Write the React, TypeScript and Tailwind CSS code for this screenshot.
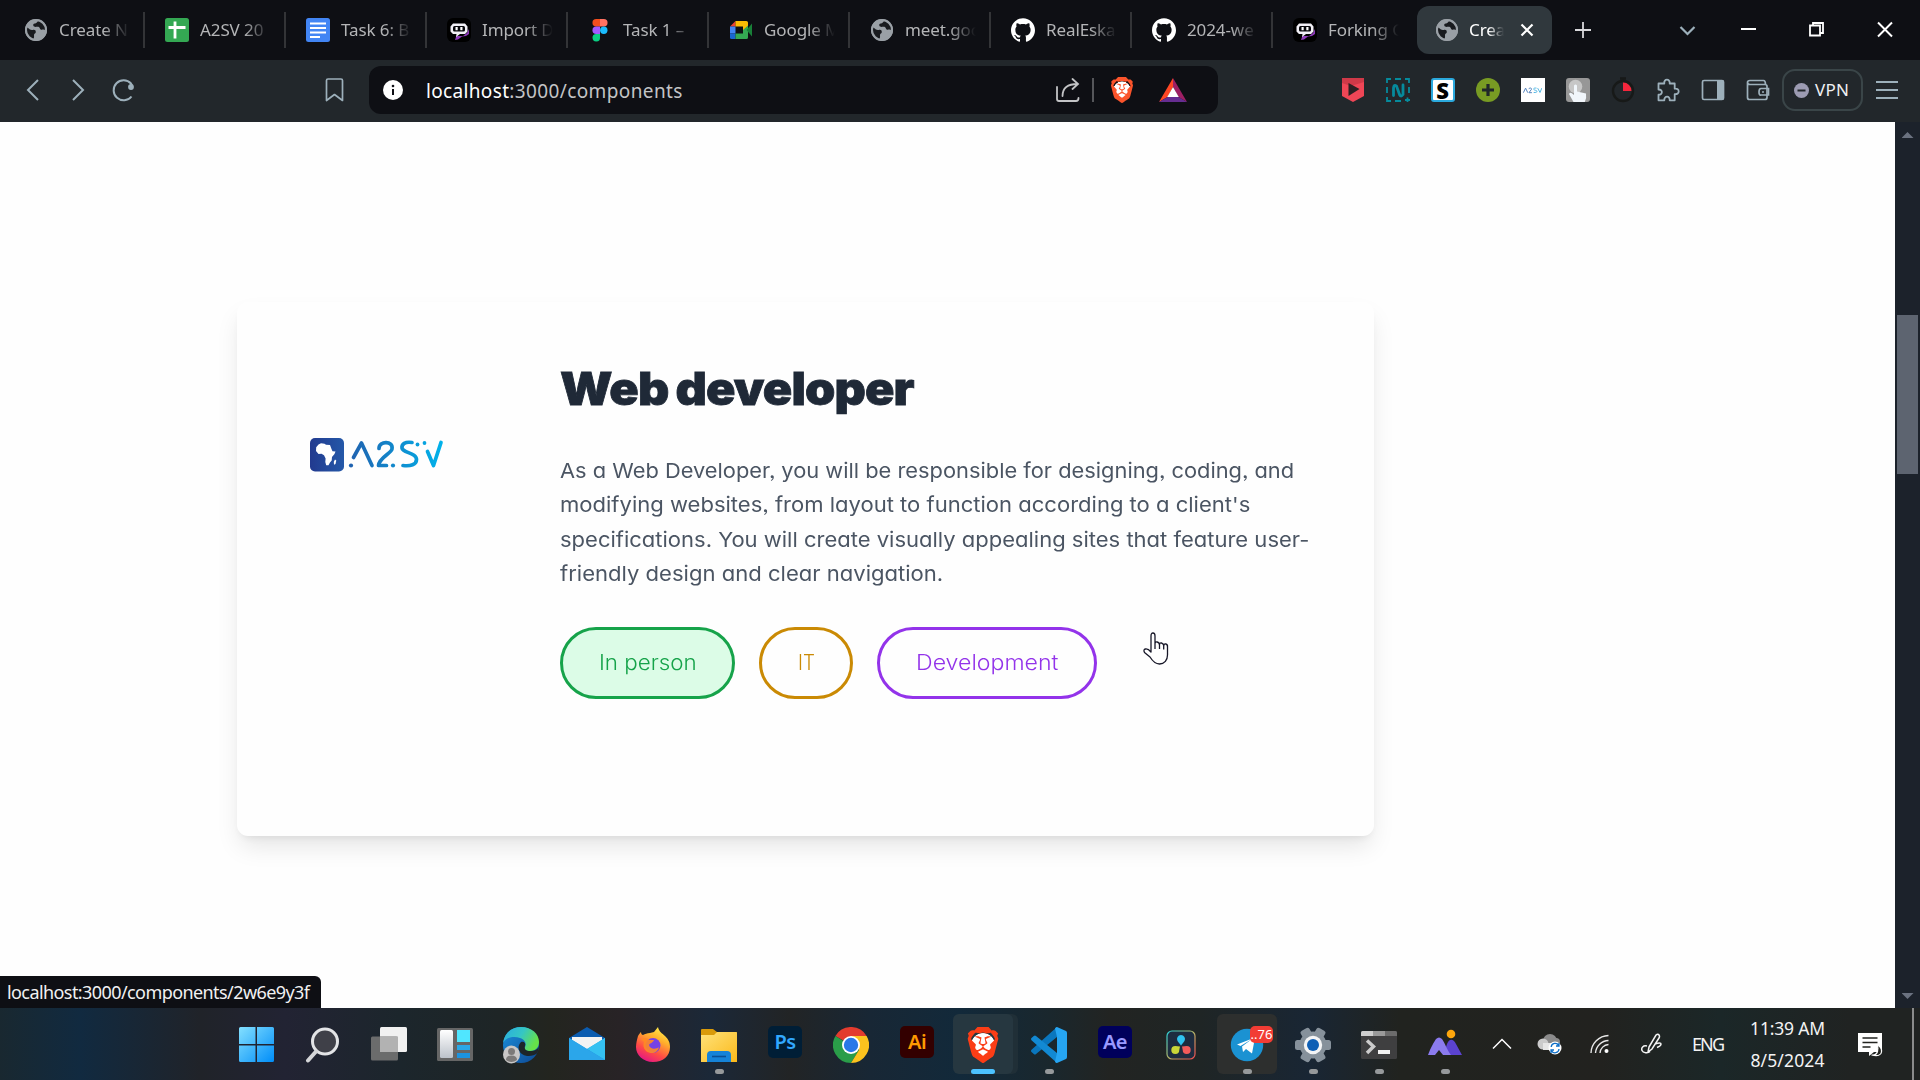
import React, { useLayoutEffect, useRef, useState } from "react";
import { SiBrave, SiGithub } from "react-icons/si";

/** Single line of text tracked so that it spans exactly `width` pixels. */
function Line({ text, width, className = "" }: { text: string; width: number; className?: string }) {
  const ref = useRef<HTMLSpanElement>(null);
  const [tracking, setTracking] = useState(0);
  useLayoutEffect(() => {
    const el = ref.current;
    if (!el) return;
    el.style.letterSpacing = "0px";
    setTracking((width - el.getBoundingClientRect().width) / (text.length - 1));
  }, [text, width]);
  return (
    <span ref={ref} className={`inline-block whitespace-pre ${className}`} style={{ letterSpacing: `${tracking}px` }}>
      {text}
    </span>
  );
}

/** Single line of text whose glyphs are widened to span exactly `width` pixels. */
function WideLine({ text, width, className = "" }: { text: string; width: number; className?: string }) {
  const ref = useRef<HTMLSpanElement>(null);
  const [scale, setScale] = useState(1);
  useLayoutEffect(() => {
    if (ref.current) setScale(width / ref.current.offsetWidth);
  }, [text, width]);
  return (
    <span className="block" style={{ width }}>
      <span ref={ref} className={`inline-block origin-left whitespace-pre ${className}`} style={{ transform: `scaleX(${scale})` }}>
        {text}
      </span>
    </span>
  );
}

const Globe = () => (
  <svg width="24" height="24" viewBox="0 0 24 24">
    <circle cx="12" cy="12" r="11" fill="#9aa0a6" />
    <path d="M3.2 9.5c2 1.3 3.3 2.9 5.6 2.4 2-.4 3 .3 3 2 0 1.500-1.800 1.500-1.800 3 0 1.600.3 2.400-.6 4.100C5 20 2 16.500 2.300 12.500zM14 2.700c-.6 1.600-1.500 2.400-3.200 2.700-1.400.3-1.800 1-1.500 2.100.4 1.300 2 1.600 3.200 1.300 1.600-.3 2.700-.1 3.300 1.400.5 1.300 1.600 1.700 2.800 1.400 1.400-.3 2.300.2 3 1C22 7.500 18.500 3.500 14 2.700z" fill="#0e0f14" opacity=".92" />
    <circle cx="12" cy="12" r="10" fill="none" stroke="#9aa0a6" strokeWidth="2" />
  </svg>
);

const Sheets = () => (
  <svg width="24" height="24" viewBox="0 0 24 24">
    <rect width="24" height="24" rx="2.500" fill="#34a853" />
    <path d="M10 3.500v17M3.500 9.500h17" stroke="#fff" strokeWidth="2.800" />
  </svg>
);

const Docs = () => (
  <svg width="24" height="24" viewBox="0 0 24 24">
    <rect width="24" height="24" rx="2.500" fill="#4285f4" />
    <path d="M4 5.500h16M4 10h16M4 14.500h16M4 19h10" stroke="#fff" strokeWidth="2.200" />
  </svg>
);

const Chatbot = () => (
  <svg width="24" height="24" viewBox="0 0 24 24">
    <rect width="24" height="24" rx="6" fill="#000" />
    <path d="M9 18h7l4-3 2-4v5l-3 2-4 .5-4 3-3 .5 1-3z" fill="#8d3ab8" />
    <path d="M6 5.500h12l2.500 3v5L18 16h-5l-4 3 .5-3H6L3.500 13.500v-5z" fill="#f2f0f6" />
    <rect x="6" y="8" width="12" height="5.500" rx="1.500" fill="#07070a" />
    <path d="M8.500 9h2.200v3.300H8.500zM13.300 9h2.200v3.300h-2.200z" fill="#fff" />
  </svg>
);

const Figma = () => (
  <svg width="24" height="24" viewBox="0 0 24 24">
    <path d="M8.200 1H12v7.500H8.200a3.750 3.750 0 0 1 0-7.500z" fill="#f24e1e" />
    <path d="M12 1h3.800a3.750 3.750 0 0 1 0 7.500H12z" fill="#ff7262" />
    <path d="M8.200 8.500H12V16H8.200a3.750 3.750 0 0 1 0-7.500z" fill="#a259ff" />
    <circle cx="15.800" cy="12.200" r="3.700" fill="#1abcfe" />
    <path d="M8.200 16H12v3.500A3.750 3.750 0 1 1 8.200 16z" fill="#0acf83" />
  </svg>
);

const Meet = () => (
  <svg width="24" height="24" viewBox="0 0 24 24">
    <path d="M1 8.500 6.500 3v5.500z" fill="#ea4335" />
    <path d="M1 8.500h5.500v7H1z" fill="#4285f4" />
    <path d="M1 15.500h5.500V21H2.500Q1 21 1 19.500z" fill="#1967d2" />
    <path d="M6.500 3h10.800q1.700 0 1.700 1.600V9l-5 4V8.500H6.500z" fill="#fbbc04" />
    <path d="M6.500 15.500H14V12l5-4.500v11.900q0 1.600-1.700 1.600H6.500z" fill="#34a853" />
    <path d="m17.500 12 5.500-6.500v13z" fill="#188038" />
  </svg>
);

const Github = () => <SiGithub size={24} color="#fff" />;

const TABS = [
  { icon: <Globe />, label: "Create N" },
  { icon: <Sheets />, label: "A2SV 20" },
  { icon: <Docs />, label: "Task 6: B" },
  { icon: <Chatbot />, label: "Import D" },
  { icon: <Figma />, label: "Task 1 –" },
  { icon: <Meet />, label: "Google M" },
  { icon: <Globe />, label: "meet.goo" },
  { icon: <Github />, label: "RealEska" },
  { icon: <Github />, label: "2024-we" },
  { icon: <Chatbot />, label: "Forking C" },
];

function TabStrip() {
  return (
    <div className="flex h-[60px] items-center bg-[#0e0f14] pl-1 text-[17px] tracking-[-0.1px] text-[#b4b5b7]">
      {TABS.map((t, i) => (
        <div key={i} className={`flex h-9 w-[141px] shrink-0 items-center pl-5 ${i < 9 ? "border-r-2 border-[#333437]" : ""}`}>
          <div className="w-6 shrink-0">{t.icon}</div>
          <div className="ml-[11px] w-[71px] overflow-hidden whitespace-nowrap [mask-image:linear-gradient(to_right,#000_62%,transparent)]">
            {t.label}
          </div>
        </div>
      ))}
      <div className="mr-3 ml-[3px] flex h-12 w-[135px] shrink-0 items-center rounded-xl bg-[#30383d] pl-[18px] text-white">
        <div className="w-6 shrink-0"><Globe /></div>
        <div className="ml-2.5 w-[35px] overflow-hidden whitespace-nowrap [mask-image:linear-gradient(to_right,#000_55%,transparent)]">Crea</div>
        <svg className="ml-[16px]" width="14" height="14" viewBox="0 0 14 14">
          <path d="m1.500 1.500 11 11m0-11-11 11" stroke="#fff" strokeWidth="2.200" />
        </svg>
      </div>
      <svg width="38" height="24" viewBox="0 0 38 24"><path d="M19 4v16M11 12h16" stroke="#d9d9dc" strokeWidth="1.800" /></svg>
      <div className="grow" />
      <div className="flex items-center">
        <svg className="w-[66px]" height="20" viewBox="0 0 66 20"><path d="m28.500 7 7 7 7-7" fill="none" stroke="#9db0bb" strokeWidth="2.200" /></svg>
        <svg className="w-[58px]" height="20" viewBox="0 0 58 20"><path d="M23 9h15" stroke="#fff" strokeWidth="2" /></svg>
        <svg className="w-[74px]" height="20" viewBox="0 0 74 20"><path d="M34 5.500h10v10H34zM37 5V3h10v10h-2.500" fill="none" stroke="#fff" strokeWidth="1.800" /></svg>
        <svg className="w-[70px]" height="20" viewBox="0 0 70 20"><path d="m28 2.500 14 14m0-14-14 14" fill="none" stroke="#fff" strokeWidth="2" /></svg>
      </div>
    </div>
  );
}

function Bat() {
  return (
    <svg width="28" height="24" viewBox="0 0 28 24">
      <path d="M14 0 0 24l8.500-5L14 9z" fill="#ff4724" />
      <path d="m14 0 14 24-8.500-5L14 9z" fill="#9e1f63" />
      <path d="m0 24 8.500-5h11L28 24z" fill="#662d91" />
      <path d="m14 9 5.800 10H8.200z" fill="#fff" />
    </svg>
  );
}

function A2svLogo({ width, height }: { width: number; height: number }) {
  return (
    <svg width={width} height={height} viewBox="0 0 134 34">
      <defs>
        <linearGradient id="a2box"><stop stopColor="#223a8f" /><stop offset="1" stopColor="#2458a8" /></linearGradient>
        <linearGradient id="a2text" gradientUnits="userSpaceOnUse" x1="38" x2="134" y1="0" y2="0">
          <stop stopColor="#2160ae" /><stop offset="1" stopColor="#00b4ec" />
        </linearGradient>
      </defs>
      <rect width="34" height="33.500" rx="5" fill="url(#a2box)" />
      <path d="M8.500 6.500 11 5.200l3.500.5 1.500 1 4 .3 1.500 4 1 2.200 3 .3-1 2.500-2.500 3-.3 3.500-1.700 2-1.500 2.800h-2.300L15.300 24l.3-3.500-1.600-3.300-2.500-1.400-3 .3L6 13l.2-3.800zM25 21.500l1.300 1-.8 3.500-1.500.8-.2-3z" fill="#fff" />
      <g fill="none" stroke="url(#a2text)" strokeWidth="3.700" strokeLinecap="round" strokeLinejoin="round">
        <path d="m43.500 19.500 8-14.500 10.500 22.500" />
        <path d="M69 10.500c0-8 14.500-8 13 .5-.8 4.500-12.800 8.500-13.500 16.500h8" />
        <path d="M102 4.500c-7-1-10.500 1.500-10 5.500.5 5 14.500 4.500 14.500 11.500 0 5-6 7-13.500 6" />
        <path d="m117.500 13.500 6 14 7.500-23" />
      </g>
      <g fill="url(#a2text)">
        <circle cx="41" cy="27.500" r="2.100" /><circle cx="83" cy="27.500" r="2.100" />
        <circle cx="107.500" cy="6.500" r="1.900" /><circle cx="114.500" cy="5" r="1.900" />
      </g>
    </svg>
  );
}

const EXTENSIONS = [
  <svg width="24" height="26" viewBox="0 0 24 26">
    <path d="M1 1h22v18L12 25 1 19z" fill="#ef4656" /><path d="M1 1h22v4L10 9 1 6z" fill="#b9303f" opacity=".6" />
    <path d="M7.500 6v13L18.500 12z" fill="#2b2023" />
  </svg>,
  <svg width="24" height="24" viewBox="0 0 24 24" fill="none" stroke="#068a9c">
    <path d="M1 5V1h4M9 1h6M19 1h4v4M1 9v6M1 19v4h4M23 9v6M9 23h6M19 22h5M21.500 19.500v5" strokeWidth="1.800" />
    <path d="M7.500 17.500V10Q8 6 10.500 8l3 8.500q1.500 3 3.500 0V7" strokeWidth="2.800" strokeLinecap="round" />
  </svg>,
  <div className="flex h-6 w-6 items-center justify-center rounded-[3px] border-2 border-[#2ba9dd] bg-white text-[22px] leading-none font-black text-black">S</div>,
  <svg width="24" height="24" viewBox="0 0 24 24"><circle cx="12" cy="12" r="12" fill="#789b23" /><path d="M12 6v12M6 12h12" stroke="#20272a" strokeWidth="3.200" /></svg>,
  <div className="flex h-6 w-6 items-center justify-center bg-white">
    <svg width="19" height="7" viewBox="38 0 96 34" fill="none" strokeWidth="5" opacity=".8"><path d="m40 28 11-23 11 23M68 10c0-8 15-7 13 1L68 28h15" stroke="#2864ad" /><path d="M106 5c-18-3-18 9-5 11s10 13-9 11M112 5l12 22 9-22" stroke="#26a4dc" /></svg>
  </div>,
  <svg width="24" height="24" viewBox="0 0 24 24">
    <rect width="24" height="24" rx="3" fill="#979797" /><circle cx="9.500" cy="8.500" r="6.800" fill="#c7c7c7" />
    <path d="M8 7.500q1.500-2 3 0v6l9 2q.8 4-1.200 8.500H7.500L3 16q1-2 3.200-.5L8 17z" fill="#f1f6fb" />
  </svg>,
  <svg width="24" height="26" viewBox="0 0 24 26"><circle cx="12" cy="14" r="10" fill="none" stroke="#171918" strokeWidth="2.400" /><path d="M9 1.500h6M12 2v3" stroke="#171918" strokeWidth="2.500" /><path d="M12 5.500a8.500 8.500 0 0 1 8.500 8.500H12z" fill="#f5263c" /></svg>,
  <svg width="24" height="24" viewBox="0 0 24 24"><path d="M2.500 5.500h5.800c-.8-5.200 6-5.200 5.400 0h5v5.200c5.300-.8 5.300 6.200 0 5.400v6.200h-5c.5-4.800-5.800-4.800-5.400 0H2.500v-5.600c4.500.3 4.500-5.500 0-5.200z" fill="none" stroke="#9db0bb" strokeWidth="1.800" strokeLinejoin="round" /></svg>,
  <svg width="24" height="24" viewBox="0 0 24 24"><rect x="1.500" y="2.500" width="21" height="19" rx="1.500" fill="none" stroke="#9db0bb" strokeWidth="1.700" /><path d="M16 2.500h6.500v19H16z" fill="#9db0bb" /></svg>,
  <svg width="24" height="24" viewBox="0 0 24 24" fill="none" stroke="#9db0bb" strokeWidth="1.700"><path d="M1.500 4.500v15q0 2 2 2h15.500q2 0 2-2v-11q0-2-2-2H4q-2.500 0-2.500-2t2.500-2h13.500q2 0 2 4" /><path d="M22.500 10.500H15q-2 0-2 3.500t2 3h7.500zM16 14h2" /></svg>,
];

function Toolbar() {
  return (
    <div className="flex h-[62px] items-center bg-[#22272b] pb-0.5 pl-2.5">
      <svg width="46" height="24" viewBox="0 0 46 24"><path d="m28 2-10 10 10 10" fill="none" stroke="#9db0bb" strokeWidth="2" /></svg>
      <svg width="44" height="24" viewBox="0 0 44 24"><path d="m17 2 10 10-10 10" fill="none" stroke="#9db0bb" strokeWidth="2" /></svg>
      <svg width="46" height="24" viewBox="0 0 46 24"><path d="M31.500 18.500A10 10 0 1 1 31 5.500l1 2" fill="none" stroke="#9db0bb" strokeWidth="2" /><circle cx="31" cy="9" r="2.900" fill="#9db0bb" /></svg>
      <svg className="ml-[165px]" width="46" height="24" viewBox="0 0 46 24"><path d="M15.500 2.500q0-1.500 1.500-1.500h13q1.500 0 1.500 1.500V22.500l-8-6-8 6z" fill="none" stroke="#9db0bb" strokeWidth="1.700" strokeLinejoin="round" /></svg>
      <div className="ml-3 flex h-12 w-[849px] items-center rounded-xl bg-[#0e0f14] pl-3.5">
        <svg width="20" height="20" viewBox="0 0 20 20"><circle cx="10" cy="10" r="10" fill="#fff" /><path d="M10 9v6" stroke="#0e0f14" strokeWidth="2" /><circle cx="10" cy="6" r="1.300" fill="#0e0f14" /></svg>
        <div className="ml-[23px] w-[630px] pt-0.5 text-[19px] text-[#c3c4c6]">
          <Line text="localhost" width={83} className="text-white" />
          <Line text=":3000/components" width={173} />
        </div>
        <svg width="24" height="24" viewBox="0 0 24 24" fill="none" stroke="#c3c4c6" strokeWidth="1.800" strokeLinecap="round"><path d="M1 9v12q0 2 2 2h17q2.500 0 2.500-3M6.500 18c0-8 5-12 15-12M16.500 1l5.500 5-5.500 5" /></svg>
        <div className="ml-3 h-6 w-0.5 bg-[#55565a]" />
        <div className="ml-[15px] flex bg-[radial-gradient(circle,#fff_45%,transparent_48%)]"><SiBrave size={26} color="#fb542b" /></div>
        <div className="ml-6"><Bat /></div>
      </div>
      <div className="ml-[112px] flex">
        {EXTENSIONS.map((icon, i) => (
          <div key={i} className="flex w-[45px] items-center justify-center">{icon}</div>
        ))}
      </div>
      <div className="ml-0.5 flex h-[42px] w-[81px] items-center rounded-[13px] border-2 border-[#3a4548] pl-2.5 text-[17px] text-[#f0f0f2]">
        <svg width="15" height="15" viewBox="0 0 15 15"><circle cx="7.500" cy="7.500" r="7.500" fill="#9c9bb2" /><path d="M3.500 7.500h8" stroke="#22272b" strokeWidth="2" /></svg>
        <Line text="VPN" width={34} className="ml-1.5" />
      </div>
      <svg width="48" height="20" viewBox="0 0 48 20"><path d="M13 2h22M13 10h22M13 18h22" stroke="#9db0bb" strokeWidth="2" /></svg>
    </div>
  );
}

const DESCRIPTION = [
  { text: "As a Web Developer, you will be responsible for designing, coding, and", width: 734 },
  { text: "modifying websites, from layout to function according to a client's", width: 690 },
  { text: "specifications. You will create visually appealing sites that feature user-", width: 749 },
  { text: "friendly design and clear navigation.", width: 383 },
];

function Page() {
  return (
    <div className="flex h-[886px] bg-[#fefefe]">
      <div className="relative w-[1895px] overflow-hidden">
        <div className="mt-[180px] ml-[237px] flex h-[534px] w-[1137px] rounded-[11px] bg-[#fefefe] font-['Inter','Lato',sans-serif] shadow-[0_13px_25px_-3px_rgba(0,0,0,.1),0_5px_8px_-5px_rgba(0,0,0,.1)] [font-feature-settings:'cv11','ss03']">
          <div className="w-[323px] pt-[136px] pl-[73px]"><A2svLogo width={134} height={34} /></div>
          <div>
            <h1 className="mt-[62px] h-[50px] text-[45px] leading-[50px] font-black text-[#1f2937]"><WideLine text="Web developer" width={354} className="tracking-[-0.8px] [word-spacing:-1.5px] [-webkit-text-stroke:0.8px_#1f2937]" /></h1>
            <div className="mt-10 text-[20.500px] text-[#4b5563]">
              {DESCRIPTION.map((l) => (
                <div key={l.text} className="h-[34.300px] leading-[34.300px]"><WideLine text={l.text} width={l.width} /></div>
              ))}
            </div>
            <div className="mt-9 flex gap-6 text-[21px] font-light">
              <div className="flex h-[72px] w-[175px] items-center justify-center rounded-full border-3 border-[#16a34a] bg-[#dcfce7] text-[#16a34a]"><WideLine text="In person" width={98} /></div>
              <div className="flex h-[72px] w-[94px] items-center justify-center rounded-full border-3 border-[#ca8a04] text-[#ca8a04]"><WideLine text="IT" width={17} /></div>
              <div className="flex h-[72px] w-[220px] items-center justify-center rounded-full border-3 border-[#9333ea] text-[#9333ea]"><WideLine text="Development" width={142} /></div>
            </div>
          </div>
        </div>
        <svg className="absolute top-[510px] left-[1142px]" width="28" height="35" viewBox="0 0 28 35">
          <path d="M9 20V4q0-3 2-3t2 3v8q0-2.500 2.200-2t2.300 3q0-2.500 2-2t2.300 3q0-2.500 2-2t1.700 3v8c0 5-3 9-8 9-4 0-7-3-9.500-7L2.500 20.500q-1.500-3 1-3.500T9 20zM13 12v5M17.500 13v4M21.700 14v3.500" fill="#fff" stroke="#171728" strokeWidth="1.300" strokeLinejoin="round" />
        </svg>
        <div className="absolute bottom-0 left-0 flex h-8 w-[321px] items-center rounded-tr-md bg-[#0e0f14] pl-[7px] text-[18px] text-[#f1f1f2]">
          <Line text="localhost:3000/components/2w6e9y3f" width={303} />
        </div>
      </div>
      <div className="flex w-[25px] flex-col items-center bg-[#1c222b] pt-2.5 pb-[9px]">
        <div className="h-[6px] w-3 bg-[#6b7280] [clip-path:polygon(50%_0,100%_100%,0_100%)]" />
        <div className="mt-[177px] h-[159px] w-[21px] bg-[#5d6470]" />
        <div className="mt-auto h-[6px] w-3 bg-[#6b7280] [clip-path:polygon(0_0,100%_0,50%_100%)]" />
      </div>
    </div>
  );
}

const AdobeTile = ({ text, className }: { text: string; className: string }) => (
  <div className={`-mt-1.5 flex h-8 w-[34px] items-center justify-center rounded-[5px] text-[20px] leading-none font-semibold tracking-[-0.5px] ${className}`}>{text}</div>
);

const Win = () => (
  <svg width="36" height="36" viewBox="0 0 36 36">
    <defs><linearGradient id="win" x1="0" y1="0" x2="1" y2="1" gradientUnits="objectBoundingBox"><stop stopColor="#84e0ff" /><stop offset="1" stopColor="#008df8" /></linearGradient></defs>
    <path d="M0 1.500Q0 0 1.500 0H16.500v17H0zM18 0h15.500Q35 0 35 1.500V17H18zM0 18.500h16.500V35h-15Q0 35 0 33.500zM18 18.500h17v15q0 1.500-1.500 1.500H18z" fill="url(#win)" />
  </svg>
);

const Search = () => (
  <svg width="36" height="36" viewBox="0 0 36 36"><circle cx="20" cy="14.500" r="12.500" fill="#3f4048" stroke="#e3e4e6" strokeWidth="3" /><path d="m11 24.500-8 9" stroke="#d5d6d9" strokeWidth="4" strokeLinecap="round" /></svg>
);

const TaskView = () => (
  <svg width="36" height="36" viewBox="0 0 36 36"><rect x="9" y="0" width="27" height="25" rx="1.500" fill="#f1f1f1" /><rect y="9.500" width="27" height="24" rx="1.500" fill="#727272" opacity=".92" /><path d="M9 9.500h18V25H9z" fill="#b2b2b2" /></svg>
);

const Widgets = () => (
  <svg width="36" height="36" viewBox="0 0 36 36">
    <defs><linearGradient id="wid" x2="0" y2="1"><stop stopColor="#fff" /><stop offset="1" stopColor="#bcc2ca" /></linearGradient></defs>
    <rect y="1" width="36" height="33" rx="1.500" fill="#666" /><rect x="3" y="3" width="13" height="28" rx="1.500" fill="url(#wid)" />
    <path d="M20 3h13v12H20z" fill="#50e6ff" /><path d="M20 18h13v5H20z" fill="#29a8e8" /><path d="M20 26h13v5H20z" fill="#1c93e0" />
  </svg>
);

const Edge = () => (
  <svg width="38" height="38" viewBox="0 0 38 38">
    <defs>
      <linearGradient id="edg" y2=".4"><stop stopColor="#29abe2" /><stop offset=".55" stopColor="#35c6c4" /><stop offset="1" stopColor="#66e049" /></linearGradient>
      <linearGradient id="edb" x2="1" y2="1"><stop stopColor="#1b90dc" /><stop offset="1" stopColor="#0d4894" /></linearGradient>
    </defs>
    <circle cx="19" cy="19" r="18" fill="url(#edb)" />
    <path d="M1 17C3 5 11 1 19 1c11 0 18 7 18 15 0 6-4 9-9 9-5 0-7-2-5-4 1.500-2 1-7-5-9S4 11 1 17z" fill="url(#edg)" />
    <path d="M19 16c-5 5-2 13 6 14 4 .5 8-1 10.500-3l1.500-6c-3 4-6 4-9 4-4 0-6-2-5-5s-1-5-4-4z" fill="#1d2529" />
    <ellipse cx="9.500" cy="28.500" rx="8.500" ry="9" fill="#c9c7c6" /><circle cx="9.500" cy="25.500" r="3.500" fill="#7c7a79" /><path d="M4 34q0-4.500 5.500-4.500T15 34q-5.500 4-11 0z" fill="#7c7a79" />
  </svg>
);

const Mail = () => (
  <svg width="36" height="36" viewBox="0 0 36 36"><path d="M0 11 18 0l18 11v5H0z" fill="#0b5cb0" /><path d="M3 10h30v13H3z" fill="#f3f3f3" /><path d="M0 11 18 22 36 11v22H0z" fill="#2ba6ea" /><path d="M36 11v22L18 22z" fill="#35c1f1" /><path d="M0 33h36L18 22z" fill="#1681db" opacity=".5" /><path d="m0 11 36 22H0z" fill="#2ba6ea" /></svg>
);

const Firefox = () => (
  <svg width="36" height="36" viewBox="0 0 36 36">
    <defs><linearGradient id="ffx" x1=".8" y1="0" x2=".3" y2="1"><stop stopColor="#fff44f" /><stop offset=".35" stopColor="#ffae2b" /><stop offset=".7" stopColor="#ff4b45" /><stop offset="1" stopColor="#e31587" /></linearGradient></defs>
    <path d="M3 9c1-2 2-3 3-4 0 2 1 3 2 3 2-1 4-2 7-2l4-1 4-5c1 5 4 6 7 9 4 4 5 7 5 11 0 9-7 15-17 15S1 28 1 20c0-4 1-7 2-11z" fill="url(#ffx)" />
    <circle cx="18" cy="18.500" r="7.500" fill="#7542e5" /><path d="M6 12c4-2 7-1 8 1h5c-1 3-4 3-5 5 1 5 8 4 10 2-1 6-8 8-13 4-3-3-3-6-2-9z" fill="#ff8a24" opacity=".9" />
  </svg>
);

const Explorer = () => (
  <svg width="36" height="34" viewBox="0 0 36 34">
    <defs><linearGradient id="fold" x2="1" y2="1"><stop stopColor="#ffe27a" /><stop offset="1" stopColor="#fbb91a" /></linearGradient></defs>
    <path d="M0 2q0-1 1-1h11l4 3h19q1 0 1 1v7H0z" fill="#d99a0a" /><path d="M0 7h13l3-3h19q1 0 1 1v29H0z" fill="url(#fold)" />
    <path d="M6 34v-7q0-4 4-4h16q4 0 4 4v7z" fill="#1583d8" /><path d="M11 28.500h14" stroke="#0a4f94" strokeWidth="1.600" />
  </svg>
);

const Chrome = () => (
  <svg width="36" height="36" viewBox="0 0 36 36">
    <path d="M18 18 2.400 9A18 18 0 0 1 33.600 9z" fill="#e33b2e" /><path d="M18 18h-1L2.400 9A18 18 0 0 0 18 36l8-13z" fill="#2a9d49" /><path d="M18 9h15.600A18 18 0 0 1 18 36l8-13z" fill="#fcc31e" />
    <circle cx="18" cy="18" r="9" fill="#fff" /><circle cx="18" cy="18" r="7.200" fill="#2a78e8" />
  </svg>
);

const VsCode = () => (
  <svg width="36" height="36" viewBox="0 0 36 36"><path d="M26 0v10L5 27q-1 1-2.200 0L.5 25q-1-1 0-2.200z" fill="#0a76bd" /><path d="M26 36V26L5 9Q4 8 2.800 9L.5 11q-1 1 0 2.200z" fill="#1289d3" /><path d="m26 0 9 4q1 .5 1 2v24q0 1.500-1 2l-9 4q-1.500 0-2-1.500L26 26V10l-2-8.500Q24.500 0 26 0z" fill="#26a5f2" /></svg>
);

const Resolve = () => (
  <svg width="30" height="30" viewBox="0 0 30 30">
    <defs><linearGradient id="rsv" x2="1" y2="1"><stop stopColor="#27d0d8" /><stop offset=".5" stopColor="#b4b567" /><stop offset="1" stopColor="#f04a50" /></linearGradient></defs>
    <rect x="1" y="1" width="28" height="28" rx="5" fill="#1d2c40" stroke="url(#rsv)" strokeWidth="1.200" />
    <path d="M15 15.500 11.500 11a4 4 0 1 1 7 0z" fill="#2fc3f0" /><path d="M14 16.500 13.300 20a4 4 0 1 1-4-4z" fill="#c9d638" /><path d="m16 16.500.7 3.500a4 4 0 1 0 4-4z" fill="#f25a5a" />
  </svg>
);

const Telegram = () => (
  <div className="relative">
    <svg width="34" height="34" viewBox="0 0 34 34"><circle cx="17" cy="17" r="16.200" fill="#1b92d2" /><path d="m7 16.500 18-7-3 16-6-4.500-3 3-1-5.500 10-7.500-11.500 7z" fill="#fff" /></svg>
    <div className="absolute -top-0.5 left-[20px] flex h-[17px] w-[23px] items-center justify-center rounded-[5px] bg-[#f23c34] text-[13px] leading-none text-white">..76</div>
  </div>
);

const Gear = () => (
  <svg width="36" height="36" viewBox="-18 -18 36 36">
    <g fill="#86919b"><circle r="13.500" />{[0, 60, 120].map((a) => <rect key={a} x="-18" y="-5" width="36" height="10" rx="2.500" transform={`rotate(${a})`} />)}</g>
    <circle r="9.200" fill="#f3f4f5" /><circle r="6" fill="#0e5fb5" />
  </svg>
);

const Terminal = () => (
  <svg width="36" height="28" viewBox="0 0 36 28"><rect width="36" height="28" rx="1.500" fill="#3f3f40" /><path d="M0 1.500Q0 0 1.500 0H12v5H0z" fill="#cfcfcf" /><path d="M12 0h12v5H12z" fill="#9a9a9a" /><path d="M24 0h10.500Q36 0 36 1.500V5H24z" fill="#6c6c6c" /><path d="m6 9.500 6.500 6L6 22" fill="none" stroke="#ccc" strokeWidth="3.500" /><path d="M17 19h12v4H17z" fill="#f2f2f2" /></svg>
);

const Peaks = () => (
  <svg width="36" height="32" viewBox="0 0 36 32"><circle cx="24" cy="5" r="4.300" fill="#fea60c" /><path d="M22 26q-5-5-2-11c2-5 6-6 9 0l6 11z" fill="#5b43d0" /><path d="M1 26C4 18 7 13 9 10q3-3 6 0c3 4 5 11 9 16h-8l-4-5-4 5z" fill="#8b7bee" /></svg>
);

const Brave = () => (
  <div className="flex bg-[radial-gradient(circle,#fff_45%,transparent_48%)]"><SiBrave size={36} color="#fb3d16" /></div>
);

const APPS: { icon: React.ReactNode; mark?: boolean; wrap?: string }[] = [
  { icon: <Win /> }, { icon: <Search /> }, { icon: <TaskView /> }, { icon: <Widgets /> }, { icon: <Edge /> }, { icon: <Mail /> },
  { icon: <Firefox /> }, { icon: <Explorer />, mark: true }, { icon: <AdobeTile text="Ps" className="bg-[#001e36] text-[#31a8ff]" /> },
  { icon: <Chrome /> }, { icon: <AdobeTile text="Ai" className="bg-[#330000] text-[#ff9a00]" /> },
  { icon: <Brave />, wrap: "bg-[#263740] shadow-[5px_0_0_#202f37]" }, { icon: <VsCode />, mark: true },
  { icon: <AdobeTile text="Ae" className="bg-[#00005b] text-[#9999ff]" /> }, { icon: <Resolve /> },
  { icon: <Telegram />, mark: true, wrap: "bg-[#2d2f2e]" }, { icon: <Gear />, mark: true }, { icon: <Terminal />, mark: true }, { icon: <Peaks />, mark: true },
];

function Taskbar() {
  return (
    <div className="flex h-[72px] items-center bg-[linear-gradient(to_right,#192830_0,#112a40_80px,#202329_200px,#222333_285px,#1c262c_400px,#1e2526_500px,#23251f_550px,#282326_620px,#1b2838_710px,#222425_790px,#182735_870px,#12293a_960px,#1a272d_1050px,#222422_1110px,#1f2525_1200px,#192634_1310px,#21231f_1400px,#22221f_1600px,#1b2728_1720px,#202322_1850px)] pl-[224px] text-[#f3f3f3]">
      {APPS.map((a, i) => (
        <div key={i} className="flex w-[66px] shrink-0 justify-center">
          <div className={`flex h-[60px] w-[60px] flex-col items-center rounded-md ${a.wrap ?? ""}`}>
            <div className="mt-1.5 flex h-[49px] items-center justify-center">{a.icon}</div>
            {a.mark && <div className="h-[5px] w-[9px] rounded-full bg-[#96999b]" />}
            {i === 11 && <div className="h-[5px] w-6 rounded-full bg-[#4cc2ff]" />}
          </div>
        </div>
      ))}
      <svg className="ml-[14px]" width="20" height="12" viewBox="0 0 20 12"><path d="m1 10.500 9-9 9 9" fill="none" stroke="#fff" strokeWidth="1.500" /></svg>
      <svg className="ml-[25px]" width="26" height="22" viewBox="0 0 26 22"><circle cx="13" cy="8" r="7" fill="#8b8b8b" /><circle cx="19" cy="9" r="4" fill="#8b8b8b" /><circle cx="6" cy="11" r="5.500" fill="#cbcbcb" /><path d="M6 10h9v7H6z" fill="#e6e6e6" /><circle cx="18" cy="15" r="6.500" fill="#fff" /><path d="M14.200 14a4 4 0 0 1 7.500-1.500m.3 3.500a4 4 0 0 1-7.600 1.500M22 10v3h-3M14 20v-3h3" fill="none" stroke="#0e6fc7" strokeWidth="1.300" /></svg>
      <svg className="ml-[27px]" width="19" height="20" viewBox="0 0 19 20"><path d="M1 19A18 18 0 0 1 18.500 1.500M5.500 19A13.500 13.500 0 0 1 18.500 6.500M10 19a9 9 0 0 1 8.500-8.500" fill="none" stroke="#e8e8e8" strokeWidth="1.400" /><circle cx="16.500" cy="17" r="2" fill="#fff" /></svg>
      <svg className="ml-[32px]" width="22" height="22" viewBox="0 0 22 22" fill="none" stroke="#f3f3f3" strokeWidth="1.500"><path d="m8 14 7-12q2-1.500 3 0t0 3l-7 11-4 3zM6 13c-4-1-6 2-5 4.500s6 3 8 1M14 11q6-2 6 0t-4 3.500" /></svg>
      <div className="ml-[29px] w-[33px] text-[18px]"><Line text="ENG" width={33} /></div>
      <div className="ml-[24px] flex w-[77px] flex-col items-center text-[17.500px]">
        <div className="h-8 leading-8"><Line text="11:39 AM" width={75} /></div>
        <div className="h-8 leading-8"><Line text="8/5/2024" width={74} /></div>
      </div>
      <svg className="ml-[31px]" width="26" height="26" viewBox="0 0 26 26"><path d="M1 2h24v19h-8l-5 4v-4H1z" fill="#fff" /><path d="M5.500 7h15M5.500 11.500h15M5.500 16h8" stroke="#22231f" strokeWidth="1.500" /><path d="M20 14q5 2 4.500 7t-10 3q5 .5 6-3.500T20 14z" fill="#22231f" stroke="#fff" strokeWidth="1.200" /></svg>
      <div className="ml-auto mr-1.5 h-full w-0.5 shrink-0 bg-[#8b8c8c]" />
    </div>
  );
}

export default function App() {
  return (
    <div className="h-[1080px] w-[1920px] overflow-hidden font-['Noto_Sans','Open_Sans',sans-serif]">
      <TabStrip />
      <Toolbar />
      <Page />
      <Taskbar />
    </div>
  );
}
